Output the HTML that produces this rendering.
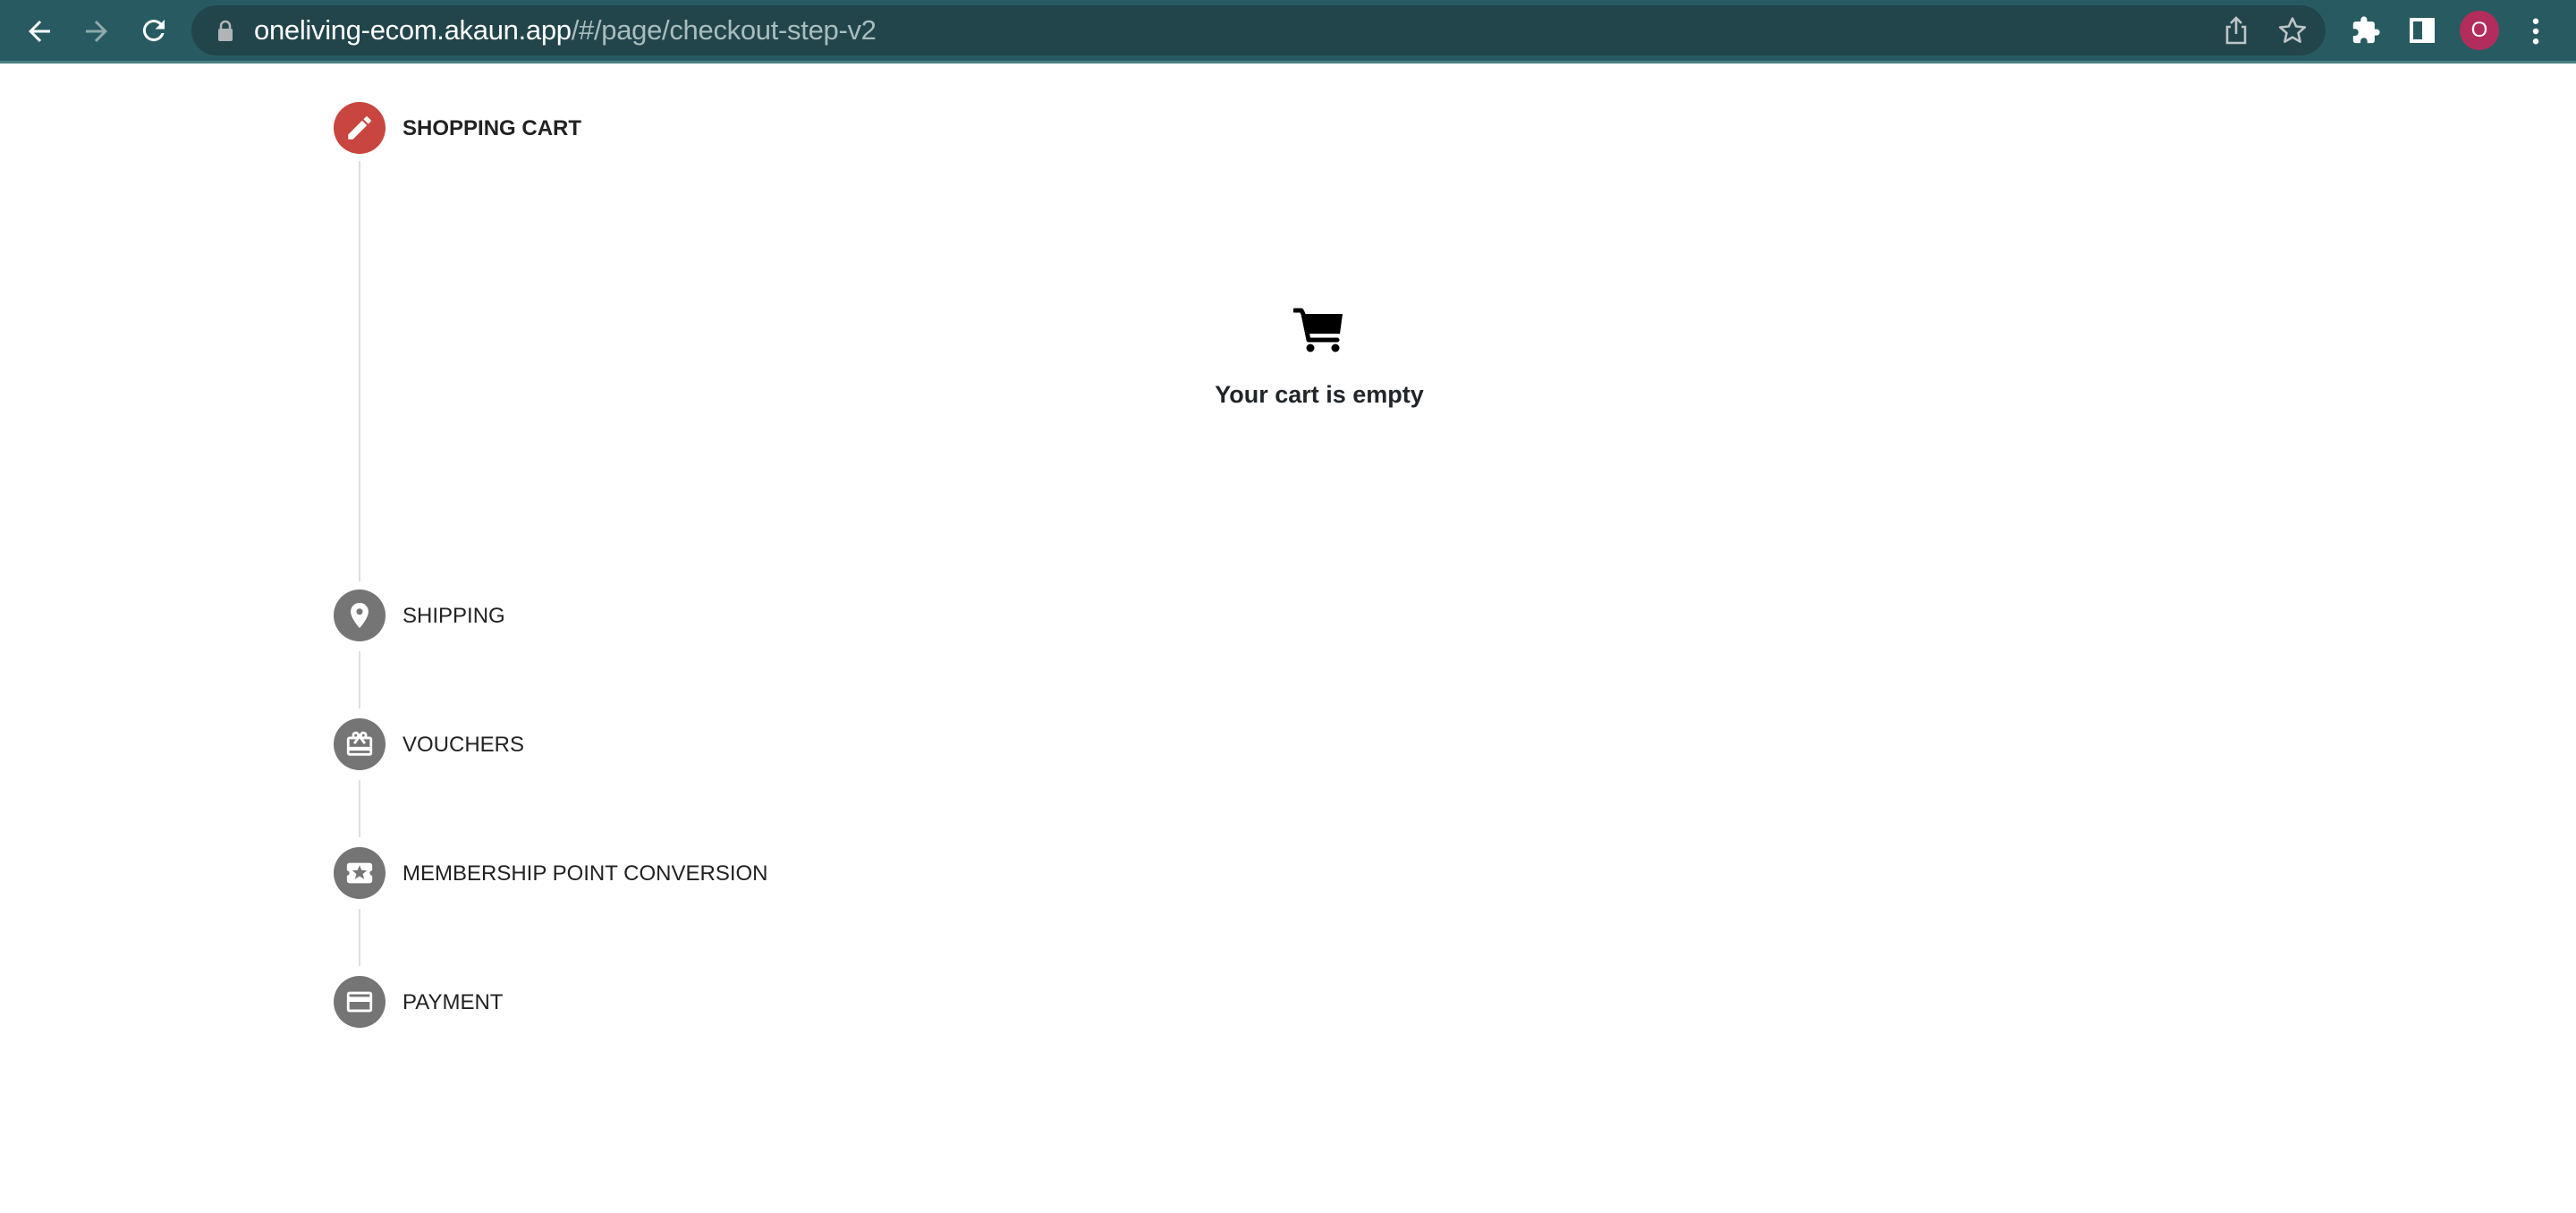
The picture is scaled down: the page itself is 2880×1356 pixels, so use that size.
<!DOCTYPE html>
<html><head><meta charset="utf-8"><style>
*{margin:0;padding:0;box-sizing:border-box}
body{width:2880px;height:1356px;background:#fff;font-family:"Liberation Sans",Arial,sans-serif;position:relative;overflow:hidden}
.bar{position:absolute;left:0;top:0;width:2880px;height:71px;background:#285b61;border-bottom:3px solid #4d7f84}
.pill{position:absolute;left:214px;top:6px;width:2386px;height:56px;border-radius:28px;background:#21454b}
.url{position:absolute;left:284px;top:16px;font-size:31px;color:#fff;letter-spacing:-0.3px;white-space:nowrap}
.url span{color:#a9bcbe}
.ic{position:absolute}
.step{position:absolute;left:373px;width:58px;height:58px;border-radius:50%;background:#757575}
.step svg{position:absolute;left:12px;top:12px}
.lbl{position:absolute;left:450px;font-size:24px;color:#222;white-space:nowrap}
.line{position:absolute;left:401px;width:2px;background:#dedede}
</style></head><body>
<div class="bar"></div>
<div class="pill"></div>
<svg class="ic" style="left:26px;top:17px" width="36" height="36" viewBox="0 0 24 24"><path d="M20 11H7.8l5.6-5.6L12 4l-8 8 8 8 1.4-1.4L7.8 13H20z" fill="#fff"/></svg>
<svg class="ic" style="left:90px;top:17px" width="36" height="36" viewBox="0 0 24 24"><path d="M4 11h12.2l-5.6-5.6L12 4l8 8-8 8-1.4-1.4 5.6-5.6H4z" fill="#8fa9ac"/></svg>
<svg class="ic" style="left:154px;top:16px" width="36" height="36" viewBox="0 0 24 24"><path d="M17.6 6.4A8 8 0 1 0 19.7 14h-2.1a6 6 0 1 1-1.4-6.2L13 11h7V4z" fill="#fff"/></svg>
<svg class="ic" style="left:242px;top:22px" width="20" height="24" viewBox="0 0 10 12"><path d="M2.5 5V3.5a2.5 2.5 0 0 1 5 0V5" stroke="#b0b4b6" stroke-width="1.3" fill="none"/><rect x="1" y="5" width="8" height="7" rx="1" fill="#b0b4b6"/></svg>
<div class="url">oneliving-ecom.akaun.app<span>/#/page/checkout-step-v2</span></div>
<svg class="ic" style="left:2486px;top:18px" width="28" height="32" viewBox="0 0 14 16"><path d="M4 6H2v9h10V6h-2M7 10V1M4 4l3-3 3 3" stroke="#c0c4c6" stroke-width="1.3" fill="none"/></svg>
<svg class="ic" style="left:2546px;top:17px" width="34" height="34" viewBox="0 0 24 24"><path d="M12 2.5l2.9 6.3 6.9.7-5.2 4.6 1.5 6.8L12 17.4l-6.1 3.5 1.5-6.8-5.2-4.6 6.9-.7z" stroke="#c0c4c6" stroke-width="1.8" fill="none" stroke-linejoin="round"/></svg>
<svg class="ic" style="left:2628px;top:17px" width="34" height="34" viewBox="0 0 24 24"><path d="M20.5 11H19V7a2 2 0 0 0-2-2h-4V3.5a2.5 2.5 0 0 0-5 0V5H4a2 2 0 0 0-2 2v3.8h1.5a2.7 2.7 0 0 1 0 5.4H2V20a2 2 0 0 0 2 2h3.8v-1.5a2.7 2.7 0 0 1 5.4 0V22H17a2 2 0 0 0 2-2v-4h1.5a2.5 2.5 0 0 0 0-5z" fill="#fff"/></svg>
<div class="ic" style="left:2694px;top:20px;width:28px;height:28px;background:#fff"><div style="position:absolute;left:4px;top:4px;width:10px;height:20px;background:#285b61"></div></div>
<div class="ic" style="left:2750px;top:12px;width:44px;height:44px;border-radius:50%;background:#b22d5b;color:#fff;font-size:24px;text-align:center;line-height:44px">O</div>
<svg class="ic" style="left:2825px;top:20px" width="20" height="30" viewBox="0 0 8 12"><circle cx="4" cy="1.5" r="1.3" fill="#fff"/><circle cx="4" cy="6" r="1.3" fill="#fff"/><circle cx="4" cy="10.5" r="1.3" fill="#fff"/></svg>

<div class="step" style="top:114px;background:#c8463f"><svg width="34" height="34" viewBox="0 0 24 24"><path d="M3 17.25V21h3.75L17.8 9.94l-3.75-3.75zM20.7 7.04a1 1 0 0 0 0-1.41l-2.34-2.34a1 1 0 0 0-1.41 0l-1.83 1.83 3.75 3.75z" fill="#fff"/></svg></div>
<div class="lbl" style="top:130px;font-weight:bold">SHOPPING CART</div>
<div class="line" style="top:180px;height:470px"></div>

<div class="step" style="top:659px"><svg width="34" height="34" viewBox="0 0 24 24"><path d="M12 2a7 7 0 0 0-7 7c0 5.25 7 13 7 13s7-7.75 7-13a7 7 0 0 0-7-7zm0 9.5A2.5 2.5 0 1 1 12 6.5a2.5 2.5 0 0 1 0 5z" fill="#fff"/></svg></div>
<div class="lbl" style="top:675px">SHIPPING</div>
<div class="line" style="top:728px;height:64px"></div>

<div class="step" style="top:803px"><svg width="34" height="34" viewBox="0 0 24 24"><path d="M20 6h-2.2c.1-.3.2-.6.2-1a3 3 0 0 0-5.5-1.7L12 4l-.5-.7A3 3 0 0 0 6 5c0 .4.1.7.2 1H4a2 2 0 0 0-2 2v11a2 2 0 0 0 2 2h16a2 2 0 0 0 2-2V8a2 2 0 0 0-2-2zm-5-2a1 1 0 1 1 0 2 1 1 0 0 1 0-2zM9 4a1 1 0 1 1 0 2 1 1 0 0 1 0-2zm11 15H4v-2h16zm0-5H4V8h5.1L7 10.8 8.6 12 12 7.4l3.4 4.6 1.6-1.2L14.9 8H20z" fill="#fff"/></svg></div>
<div class="lbl" style="top:819px">VOUCHERS</div>
<div class="line" style="top:872px;height:64px"></div>

<div class="step" style="top:947px"><svg width="34" height="34" viewBox="0 0 24 24"><path d="M20 12a2 2 0 0 1 2-2V6a2 2 0 0 0-2-2H4a2 2 0 0 0-2 2v4a2 2 0 0 1 0 4v4a2 2 0 0 0 2 2h16a2 2 0 0 0 2-2v-4a2 2 0 0 1-2-2zm-4.4 4.8L12 14.5l-3.6 2.3 1.1-4.1-3.3-2.7 4.2-.3L12 5.8l1.6 3.9 4.2.3-3.3 2.7z" fill="#fff"/></svg></div>
<div class="lbl" style="top:963px">MEMBERSHIP POINT CONVERSION</div>
<div class="line" style="top:1016px;height:64px"></div>

<div class="step" style="top:1091px"><svg width="34" height="34" viewBox="0 0 24 24"><path d="M20 4H4a2 2 0 0 0-2 2v12a2 2 0 0 0 2 2h16a2 2 0 0 0 2-2V6a2 2 0 0 0-2-2zm0 14H4v-6h16zm0-10H4V6h16z" fill="#fff"/></svg></div>
<div class="lbl" style="top:1107px">PAYMENT</div>

<svg class="ic" style="left:1446px;top:344px" width="58" height="52" viewBox="0 0 58 52"><path d="M1 3h8l2 4 6 29h32" stroke="#000" stroke-width="5" fill="none" stroke-linecap="round" stroke-linejoin="round"/><path d="M11 7h44l-3 22H16z" fill="#000"/><circle cx="19" cy="45" r="4.5" fill="#000"/><circle cx="47" cy="45" r="4.5" fill="#000"/></svg>
<div style="position:absolute;left:1300px;width:350px;top:426px;text-align:center;font-size:27px;font-weight:bold;color:#212529">Your cart is empty</div>
</body></html>
